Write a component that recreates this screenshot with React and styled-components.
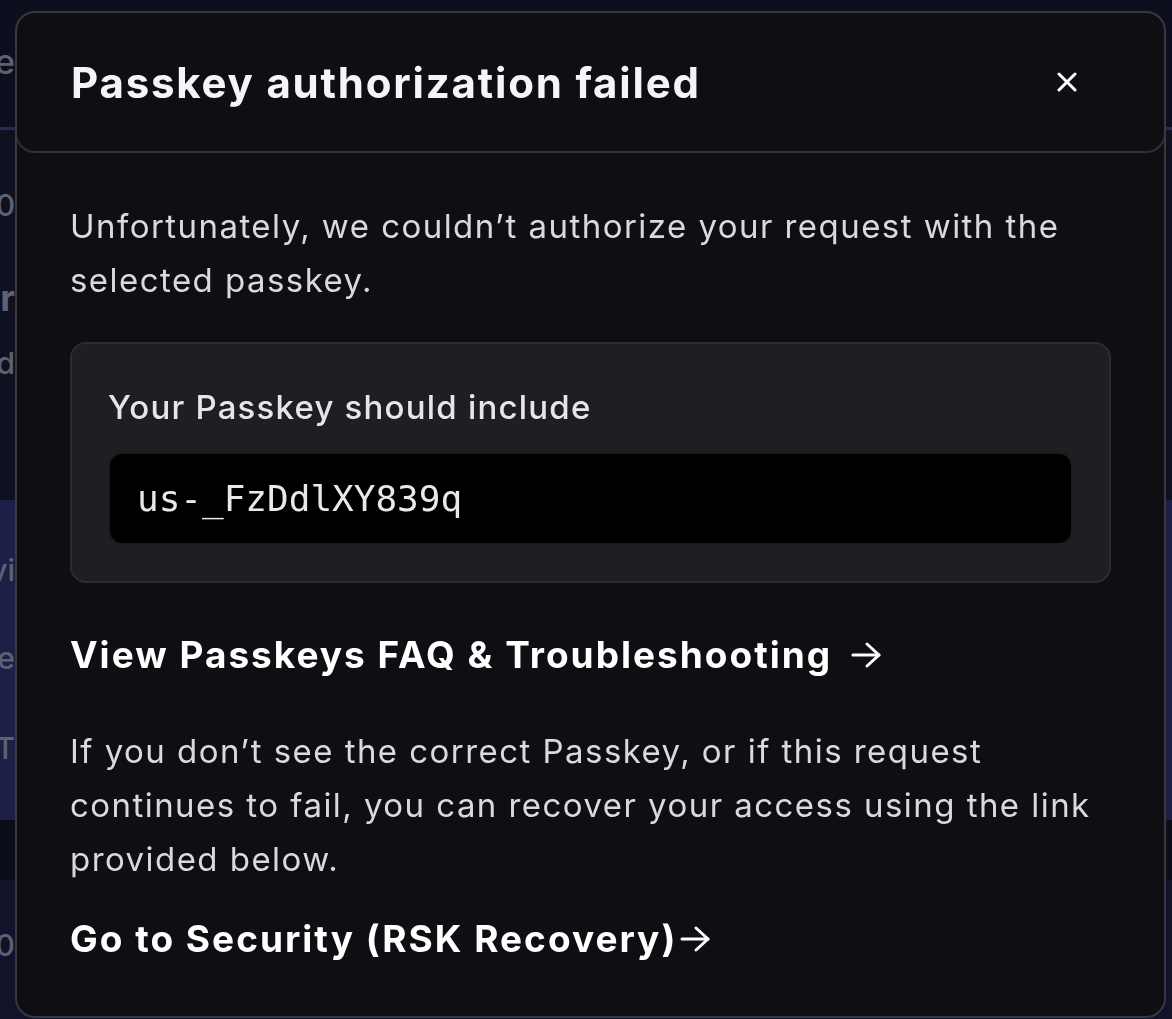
import React from "react";
import styled, { createGlobalStyle } from "styled-components";

const Global = createGlobalStyle`
  html, body { margin: 0; padding: 0; }
  body {
    background: #0d0f1d;
    font-family: Inter, Lato, "Noto Sans", sans-serif;
    width: 1172px;
    height: 1019px;
    overflow: hidden;
  }
`;

const Backdrop = styled.div`
  display: flex;
  flex-direction: column;
  width: 1172px;
  height: 1019px;
`;

const BgSection = styled.div`
  height: ${(p) => p.$h}px;
  background: ${(p) => p.$bg};
  border-bottom: ${(p) => (p.$line ? `3px solid ${p.$line}` : "none")};
  display: flex;
  flex-direction: column;
  box-sizing: border-box;
`;

const BgText = styled.div`
  width: 40px;
  margin-top: ${(p) => p.$top}px;
  display: flex;
  justify-content: flex-end;
  overflow: hidden;
  white-space: nowrap;
  color: #5d6174;
  font-size: ${(p) => p.$size || 30}px;
  font-weight: ${(p) => p.$w || 500};
  line-height: 40px;
  padding-right: 25px;
  box-sizing: border-box;
`;

const Modal = styled.div`
  position: fixed;
  left: 15px;
  top: 11px;
  width: 1151px;
  height: 1007px;
  box-sizing: border-box;
  background: #0f0f13;
  border: 2px solid #38383f;
  border-radius: 20px;
  display: flex;
  flex-direction: column;
  overflow: hidden;
`;

const Header = styled.div`
  height: 142px;
  margin: -2px -2px 0;
  box-sizing: border-box;
  border: 2px solid #2f3036;
  border-radius: 20px;
  display: flex;
  align-items: center;
  justify-content: space-between;
  padding: 0 86px 0 54px;
  flex-shrink: 0;
`;

const Title = styled.h1`
  margin: 0;
  color: #f5f5f7;
  font-size: 42px;
  font-weight: 700;
  letter-spacing: 1.8px;
`;

const CloseButton = styled.button`
  background: none;
  border: none;
  padding: 0;
  width: 22px;
  height: 22px;
  display: flex;
  align-items: center;
  justify-content: center;
  cursor: pointer;
`;

const Body = styled.div`
  padding: 46px 53px 0 53px;
  display: flex;
  flex-direction: column;
`;

const Paragraph = styled.p`
  margin: ${(p) => p.$mt || 0}px 0 0;
  color: #d9d9de;
  font-size: 33px;
  line-height: 54px;
  font-weight: 400;
  letter-spacing: 1.45px;
`;

const IncludeBox = styled.div`
  margin-top: 35px;
  background: #1f1f23;
  border: 2px solid #2c2c31;
  border-radius: 16px;
  padding: 41px 36px 36px 36px;
  display: flex;
  flex-direction: column;
  gap: 23px;
`;

const Label = styled.div`
  color: #e6e6ea;
  font-size: 33px;
  line-height: 44px;
  font-weight: 500;
  letter-spacing: 1.2px;
`;

const CodeField = styled.div`
  height: 93px;
  box-sizing: border-box;
  background: #000;
  border: 2px solid #1c1c20;
  border-radius: 14px;
  display: flex;
  align-items: center;
  padding-left: 27px;
  font-family: "DejaVu Sans Mono", monospace;
  font-size: 36px;
  color: #e9e9ec;
`;

const LinkRow = styled.a`
  margin-top: ${(p) => p.$mt}px;
  display: flex;
  align-items: center;
  gap: ${(p) => p.$gap}px;
  color: #ffffff;
  font-size: 37px;
  line-height: 44px;
  font-weight: 700;
  text-decoration: none;
  letter-spacing: 2px;
`;

const Arrow = () => (
  <svg width="32" height="28" viewBox="0 0 32 28" fill="none" stroke="#fff" strokeWidth="3" strokeLinecap="round" strokeLinejoin="round">
    <line x1="3" y1="14" x2="29" y2="14" />
    <polyline points="17,3 29,14 17,25" />
  </svg>
);

export default function App() {
  return (
    <>
      <Global />
      <Backdrop>
        <BgSection $h={130} $bg="#0d0f1e" $line="#262b55">
          <BgText $top={42} $size={34}>Balance</BgText>
        </BgSection>
        <BgSection $h={370} $bg="#0f1120">
          <BgText $top={55} $size={30}>$0.00</BgText>
          <BgText $top={53} $size={36} $w={700}>Transfer</BgText>
          <BgText $top={25} $size={30}>Send</BgText>
        </BgSection>
        <BgSection $h={320} $bg="#1c2046">
          <BgText $top={50} $size={30}>Advi</BgText>
          <BgText $top={48} $size={30}>Stake</BgText>
          <BgText $top={50} $size={30}>RST</BgText>
        </BgSection>
        <BgSection $h={60} $bg="#0b0d18" />
        <BgSection $h={139} $bg="#10132a">
          <BgText $top={45} $size={30}>$0.0</BgText>
        </BgSection>
      </Backdrop>
      <Modal role="dialog">
        <Header>
          <Title>Passkey authorization failed</Title>
          <CloseButton aria-label="Close">
            <svg width="20" height="20" viewBox="0 0 20 20" stroke="#fff" strokeWidth="3" strokeLinecap="round">
              <line x1="2" y1="2" x2="18" y2="18" />
              <line x1="18" y1="2" x2="2" y2="18" />
            </svg>
          </CloseButton>
        </Header>
        <Body>
          <Paragraph>
            Unfortunately, we couldn’t authorize your request with the selected passkey.
          </Paragraph>
          <IncludeBox>
            <Label>Your Passkey should include</Label>
            <CodeField>us-_FzDdlXY839q</CodeField>
          </IncludeBox>
          <LinkRow href="#" $mt={50} $gap={18}>
            View Passkeys FAQ &amp; Troubleshooting <Arrow />
          </LinkRow>
          <Paragraph $mt={47}>
            If you don’t see the correct Passkey, or if this request continues to fail, you can recover your access using the link provided below.
          </Paragraph>
          <LinkRow href="#" $mt={31} $gap={2}>
            Go to Security (RSK Recovery) <Arrow />
          </LinkRow>
        </Body>
      </Modal>
    </>
  );
}
